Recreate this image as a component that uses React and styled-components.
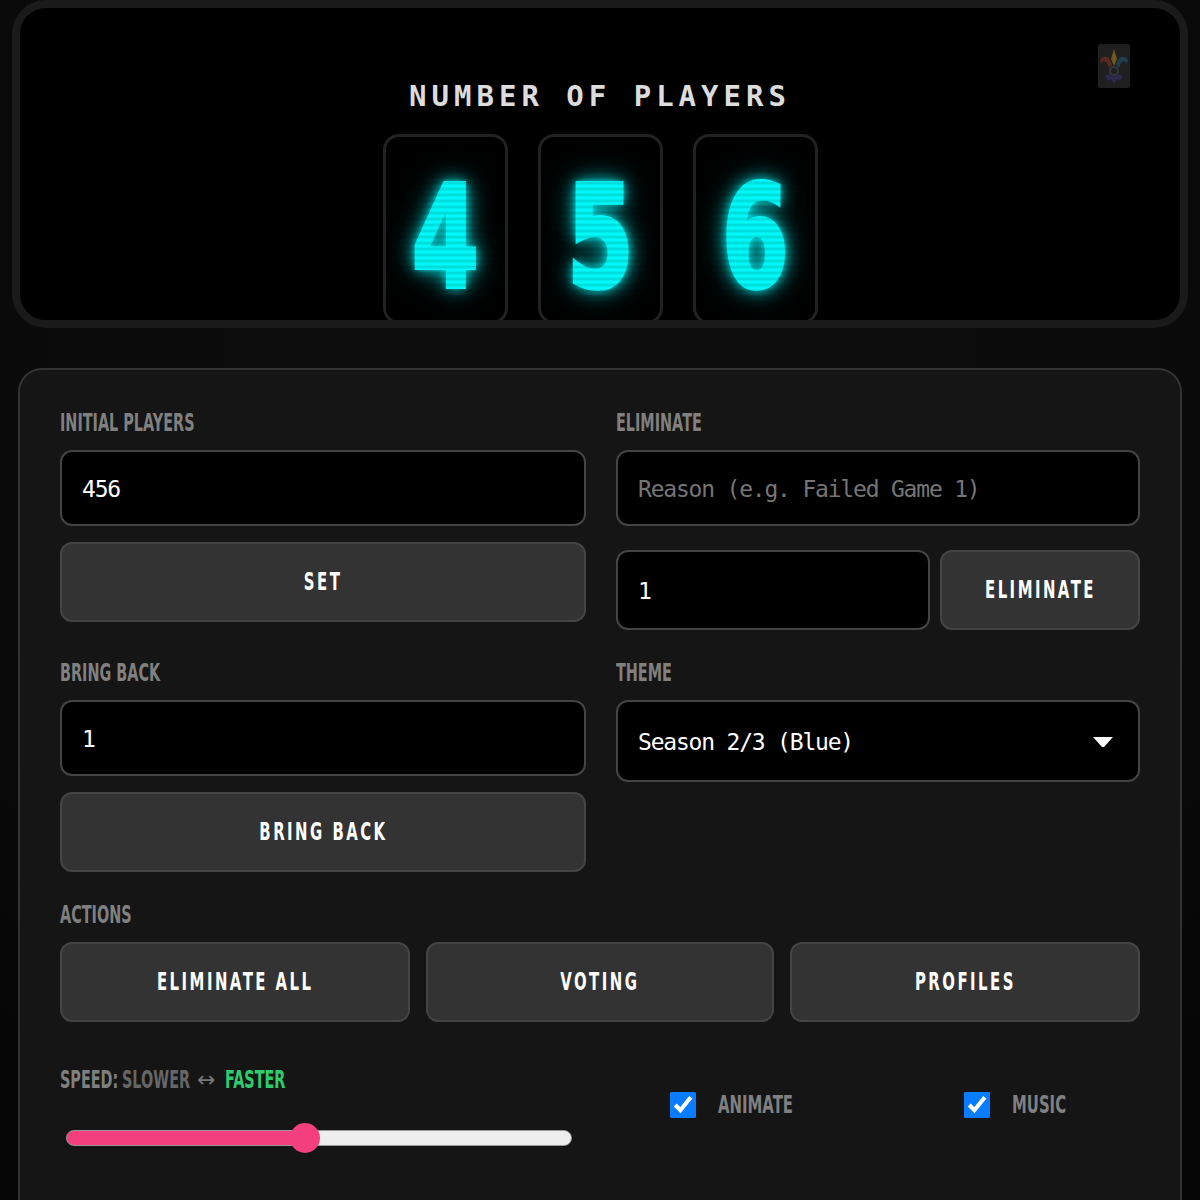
import React from 'react';
import styled, { createGlobalStyle } from 'styled-components';

const labelFont = `"DejaVu Sans", "Liberation Sans", sans-serif`;
const monoFont = `"DejaVu Sans Mono", "Liberation Mono", monospace`;

const GlobalStyle = createGlobalStyle`
    html, body {
        margin: 0;
        padding: 0;
        background: #0a0a0a;
    }
    * {
        box-sizing: border-box;
    }
`

const Page = styled.div`
    width: 1200px;
    height: 1200px;
    padding: 0 12px;
    overflow: hidden;
    background: radial-gradient(circle at 50% 30%, #0d0d0d 0%, #0a0a0a 60%, #050505 100%);
`

const Display = styled.section`
    position: relative;
    height: 328px;
    border: 8px solid #1a1a1a;
    border-radius: 34px;
    background: #000;
    overflow: hidden;
    display: flex;
    flex-direction: column;
    align-items: center;
    padding-top: 70px;
`

const DisplayTitle = styled.h1`
    margin: 0 0 20px;
    font: 700 29px/36px ${monoFont};
    letter-spacing: 5px;
    color: #dcdcdc;
    white-space: pre;
`

const Digits = styled.div`
    display: flex;
    gap: 30px;
`

const DigitBox = styled.div`
    position: relative;
    width: 125px;
    height: 190px;
    flex: none;
    border: 3px solid #222;
    border-radius: 16px;
    display: flex;
    justify-content: center;
    overflow: hidden;
    &::after {
        content: '';
        position: absolute;
        inset: 0;
        background: repeating-linear-gradient(0deg, rgba(0, 0, 0, 0.16) 0, transparent 3px, rgba(0, 0, 0, 0.16) 6px);
    }
`

const Digit = styled.span`
    margin-top: 30px;
    font: 700 142px/142px ${labelFont};
    color: #00ffff;
    -webkit-text-stroke: 4px #00ffff;
    transform: scaleX(0.68);
    text-shadow: 0 0 10px #00ffff, 0 0 22px rgba(0, 255, 255, 0.8), 0 0 38px rgba(0, 255, 255, 0.55);
`

const Logo = styled.div`
    position: absolute;
    top: 36px;
    right: 50px;
    width: 32px;
    height: 44px;
    border-radius: 2px;
    background: #1f1f1f;
    display: flex;
    align-items: center;
    justify-content: center;
    svg {
        opacity: 0.5;
    }
`

const Panel = styled.section`
    margin: 40px 6px 0;
    padding: 38px 40px 0;
    height: 900px;
    border: 2px solid #333;
    border-radius: 24px;
    background: #151515;
`

const Columns = styled.div`
    display: grid;
    grid-template-columns: 526px 524px;
    column-gap: 30px;
    row-gap: 28px;
`

const Group = styled.div`
    display: flex;
    flex-direction: column;
`

const Label = styled.label`
    display: block;
    height: 28px;
    margin-bottom: 14px;
    font: 700 24px/30px ${labelFont};
    color: #808080;
    text-transform: uppercase;
    white-space: nowrap;
    transform: scaleX(0.6);
    transform-origin: left center;
`

const Field = styled.input`
    display: block;
    width: ${props => props.$width || '100%'};
    height: ${props => props.$height || '76px'};
    flex: none;
    padding: 2px 20px 0;
    border: 2px solid #444;
    border-radius: 12px;
    background: #000;
    color: #fff;
    font: 400 23px ${monoFont};
    letter-spacing: -1.2px;
    outline: none;
    &::placeholder {
        color: #757575;
        opacity: 1;
    }
`

const Button = styled.button`
    height: 80px;
    width: ${props => props.$width || '100%'};
    margin-top: ${props => props.$top || '0'};
    flex: none;
    border: 2px solid #444;
    border-radius: 12px;
    background: #333;
    color: #fff;
    font: 700 24px ${labelFont};
    text-transform: uppercase;
`

const ButtonText = styled.span`
    display: inline-block;
    letter-spacing: 4px;
    white-space: nowrap;
    transform: scaleX(0.62);
`

const Row = styled.div`
    display: flex;
    gap: 10px;
    margin-top: 24px;
`

const SelectWrap = styled.div`
    position: relative;
    height: 82px;
    svg {
        position: absolute;
        right: 27px;
        top: 37px;
    }
`

const Select = styled.select`
    width: 100%;
    height: 100%;
    padding: 2px 20px 0;
    appearance: none;
    border: 2px solid #444;
    border-radius: 12px;
    background: #000;
    color: #fff;
    font: 400 23px ${monoFont};
    letter-spacing: -1.2px;
    outline: none;
`

const Actions = styled.div`
    display: grid;
    grid-template-columns: 350px 348px 350px;
    column-gap: 16px;
`

const ActionsGroup = styled.div`
    margin-top: 28px;
`

const Footer = styled.div`
    margin-top: 44px;
    display: flex;
`

const SpeedGroup = styled.div`
    width: 526px;
    flex: none;
`

const SpeedLabel = styled.div`
    height: 28px;
    display: flex;
    align-items: center;
    gap: 4px;
    font: 700 24px/30px ${labelFont};
    color: #808080;
`

const SpeedWord = styled.span`
    color: ${props => props.$color};
    width: ${props => props.$width}px;
    white-space: nowrap;
    transform: scaleX(0.6);
    transform-origin: left center;
`

const SpeedArrow = styled.span`
    width: 24px;
    font: 400 22px/28px ${labelFont};
    color: #777;
`

const Slider = styled.input`
    display: block;
    width: 506px;
    height: 30px;
    margin: 29px 0 0 6px;
    appearance: none;
    background: transparent;
    &::-webkit-slider-runnable-track {
        height: 16px;
        border-radius: 8px;
        border: 1px solid #999;
        background: linear-gradient(to right, #f43f7f 0 47.5%, #eee 47.5% 100%);
    }
    &::-webkit-slider-thumb {
        appearance: none;
        width: 30px;
        height: 30px;
        margin-top: -8px;
        border-radius: 50%;
        background: #f43f7f;
    }
`

const Toggles = styled.div`
    display: flex;
    padding: 24px 0 0 84px;
    height: 54px;
`

const Toggle = styled.label`
    width: 294px;
    display: flex;
    align-items: center;
    gap: 22px;
    font: 700 24px/30px ${labelFont};
    color: #808080;
    text-transform: uppercase;
`

const ToggleText = styled.span`
    transform: scaleX(0.62);
    transform-origin: left center;
`

const Check = styled.input`
    width: 26px;
    height: 26px;
    margin: 0;
    accent-color: #0a7cff;
`

function JesterLogo() {
    return (
        <svg width="30" height="38" viewBox="0 0 30 38" fill="none">
            <path d="M15 2 L18 12 L15 19 L12 12 Z" fill="#b8931f" />
            <path d="M13 18 C11 9 5 7 1 13 L2 17 C5 12 8 14 10 21 Z" fill="#8e3328" />
            <path d="M17 18 C19 9 25 7 29 13 L28 17 C25 12 22 14 20 21 Z" fill="#1f5f7a" />
            <circle cx="15" cy="24" r="4" stroke="#4c4c5c" strokeWidth="2" />
            <path d="M6 29 L10 27 L15 30 L20 27 L24 29 L21 34 L18 32 L15 37 L12 32 L9 34 Z" fill="#37337a" />
        </svg>
    )
}

export default function App() {
    return (
        <Page>
            <GlobalStyle />
            <Display>
                <DisplayTitle>NUMBER OF PLAYERS</DisplayTitle>
                <Digits>
                    {['4', '5', '6'].map(d => (
                        <DigitBox key={d}>
                            <Digit>{d}</Digit>
                        </DigitBox>
                    ))}
                </Digits>
                <Logo>
                    <JesterLogo />
                </Logo>
            </Display>
            <Panel>
                <Columns>
                    <Group>
                        <Label>Initial Players</Label>
                        <Field defaultValue="456" />
                        <Button $top="16px"><ButtonText>Set</ButtonText></Button>
                    </Group>
                    <Group>
                        <Label>Eliminate</Label>
                        <Field placeholder="Reason (e.g. Failed Game 1)" />
                        <Row>
                            <Field defaultValue="1" $width="314px" $height="80px" />
                            <Button $width="200px"><ButtonText>Eliminate</ButtonText></Button>
                        </Row>
                    </Group>
                    <Group>
                        <Label>Bring Back</Label>
                        <Field defaultValue="1" />
                        <Button $top="16px"><ButtonText>Bring Back</ButtonText></Button>
                    </Group>
                    <Group>
                        <Label>Theme</Label>
                        <SelectWrap>
                            <Select defaultValue="blue">
                                <option value="blue">Season 2/3 (Blue)</option>
                            </Select>
                            <svg width="20" height="10" viewBox="0 0 20 10">
                                <path d="M0 0 H20 L11 10 H9 Z" fill="#fff" />
                            </svg>
                        </SelectWrap>
                    </Group>
                </Columns>
                <ActionsGroup>
                    <Label>Actions</Label>
                    <Actions>
                        <Button><ButtonText>Eliminate All</ButtonText></Button>
                        <Button><ButtonText>Voting</ButtonText></Button>
                        <Button><ButtonText>Profiles</ButtonText></Button>
                    </Actions>
                </ActionsGroup>
                <Footer>
                    <SpeedGroup>
                        <SpeedLabel>
                            <SpeedWord $width={58} $color="#808080">SPEED:</SpeedWord>
                            <SpeedWord $width={71} $color="#666">SLOWER</SpeedWord>
                            <SpeedArrow>↔</SpeedArrow>
                            <SpeedWord $width={60} $color="#2ecc71">FASTER</SpeedWord>
                        </SpeedLabel>
                        <Slider type="range" min="0" max="100" defaultValue="47" />
                    </SpeedGroup>
                    <Toggles>
                        <Toggle>
                            <Check type="checkbox" defaultChecked />
                            <ToggleText>Animate</ToggleText>
                        </Toggle>
                        <Toggle>
                            <Check type="checkbox" defaultChecked />
                            <ToggleText>Music</ToggleText>
                        </Toggle>
                    </Toggles>
                </Footer>
            </Panel>
        </Page>
    )
}
